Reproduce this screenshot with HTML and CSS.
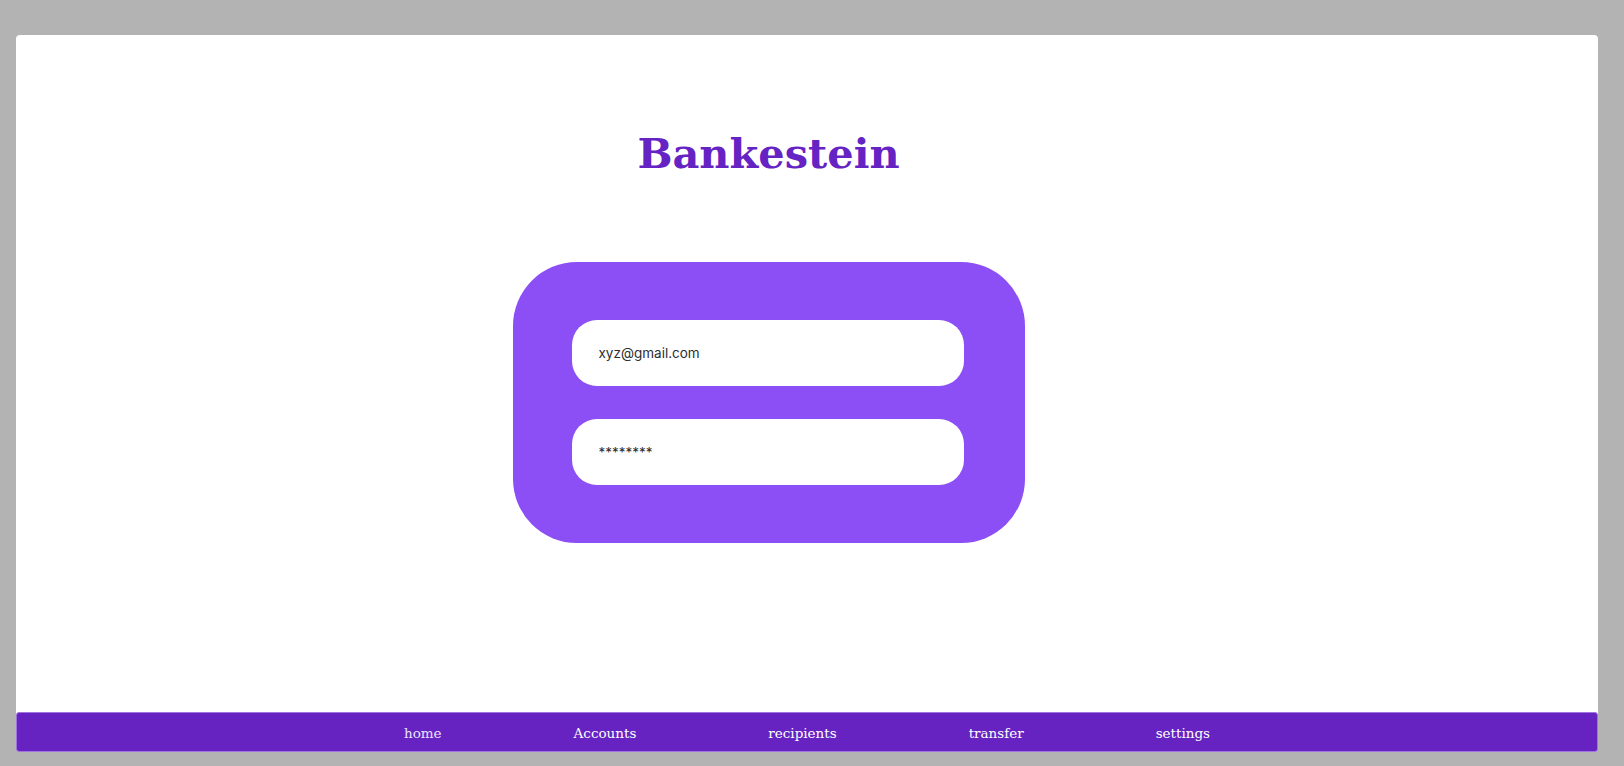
FILE: index.html
```html
<!DOCTYPE html>
<html lang="en">
<head>
<meta charset="utf-8">
<title>Bankestein</title>
<link rel="stylesheet" href="styles.css">
</head>
<body>
  <div class="panel">
    <main class="main">
      <h1 class="title">Bankestein</h1>
      <form class="card">
        <input class="field" type="text" value="xyz@gmail.com">
        <input class="field" type="text" value="********">
      </form>
    </main>
    <nav class="nav">
      <a class="nav-link nav-link-active" href="#">home</a>
      <a class="nav-link" href="#">Accounts</a>
      <a class="nav-link" href="#">recipients</a>
      <a class="nav-link" href="#">transfer</a>
      <a class="nav-link" href="#">settings</a>
    </nav>
  </div>
</body>
</html>
```

FILE: styles.css
```css
* { box-sizing: border-box; }

html, body {
  margin: 0;
  height: 100%;
}

body {
  background: #b3b3b3;
  padding: 35px 26px 14px 16px;
  font-family: "DejaVu Serif", serif;
}

.panel {
  height: 717px;
  background: #ffffff;
  border-radius: 4px;
  display: flex;
  flex-direction: column;
}

.main {
  flex: 1;
  display: flex;
  flex-direction: column;
  align-items: center;
  padding: 96px 77px 0 0;
}

.title {
  margin: 0;
  font-family: "DejaVu Serif", serif;
  font-weight: 700;
  font-size: 41.5px;
  line-height: 46px;
  color: #6623c4;
}

.card {
  margin-top: 85px;
  width: 512px;
  height: 281px;
  background: #8c4ef5;
  border-radius: 64px;
  padding: 58px 61px 58px 59px;
  display: flex;
  flex-direction: column;
  gap: 33px;
}

.field {
  display: block;
  width: 100%;
  height: 66px;
  border: none;
  outline: none;
  border-radius: 25px;
  background: #ffffff;
  padding: 0 20px 0 27px;
  font-family: "Inter", "Liberation Sans", sans-serif;
  font-size: 13.5px;
  color: #2e2e2e;
}

.nav {
  height: 40px;
  background: #6623c2;
  border: 1px solid #9d74e0;
  border-radius: 3px;
  display: flex;
  justify-content: center;
  align-items: center;
  gap: 132px;
  padding-top: 2px;
}

.nav-link {
  font-family: "DejaVu Serif", serif;
  font-size: 13.5px;
  color: #ffffff;
  text-decoration: none;
}

.nav-link-active {
  color: #ece3fa;
}
```
